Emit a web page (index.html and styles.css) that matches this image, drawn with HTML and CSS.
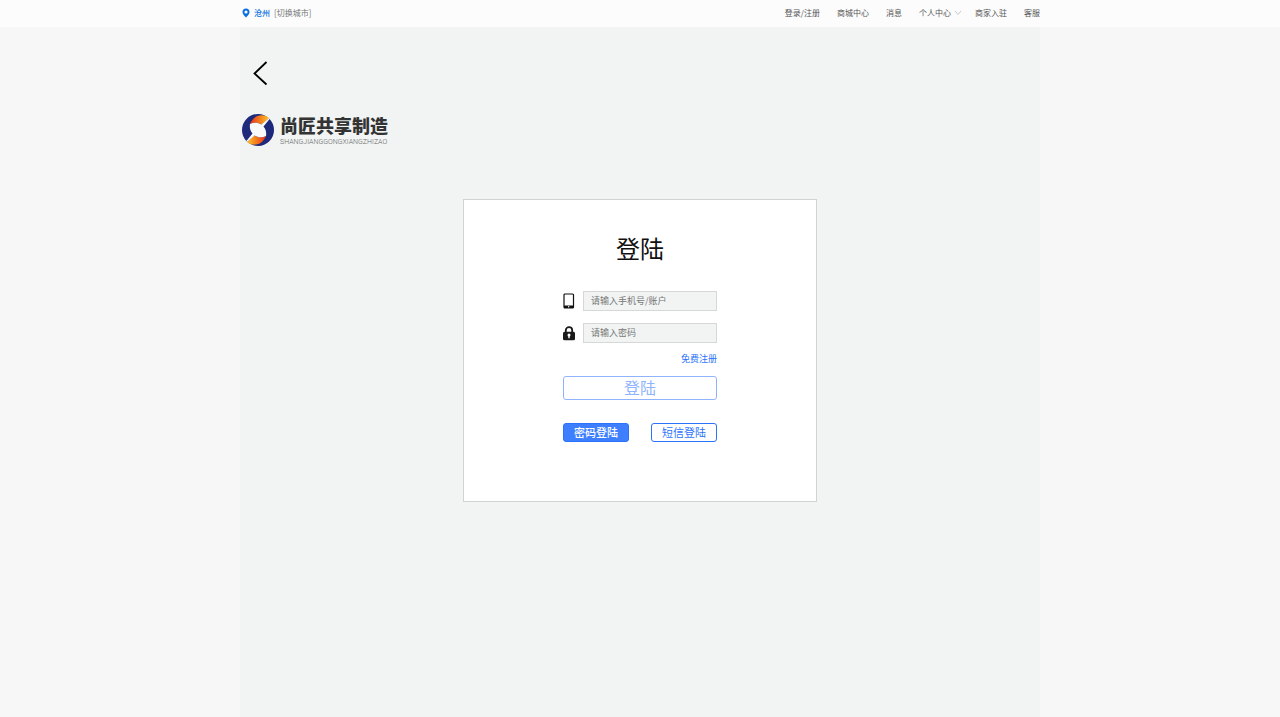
FILE: index.html
```
<!DOCTYPE html>
<html lang="zh-CN">
<head>
<meta charset="UTF-8">
<meta name="viewport" content="width=device-width, initial-scale=1">
<title>登陆</title>
<link rel="stylesheet" href="styles.css">
</head>
<body>

<header class="top-bar">
  <div class="top-inner">
    <div class="location">
      <svg class="pin" viewBox="0 0 8 10"><path fill="#0a6fe0" fill-rule="evenodd" d="M4 0.500a3.500 3.500 0 0 1 3.500 3.500C7.500 6 5.500 8 4 9.500 2.500 8 .5 6 .5 4A3.500 3.500 0 0 1 4 .5zM4 2.400a1.600 1.600 0 1 0 0 3.200 1.600 1.600 0 0 0 0-3.200z"/></svg>
      <a href="#" class="city">沧州</a>
      <a href="#" class="switch">[切换城市]</a>
    </div>
    <nav class="nav">
      <a href="#">登录/注册</a>
      <a href="#">商城中心</a>
      <a href="#">消息</a>
      <a href="#" class="has-arrow">个人中心<svg class="arrow" viewBox="0 0 8 6"><path fill="none" stroke="#bbb" stroke-width="0.800" d="M1 1l3 3.500L7 1"/></svg></a>
      <a href="#">商家入驻</a>
      <a href="#">客服</a>
    </nav>
  </div>
</header>

<main class="content">
  <button type="button" class="back" aria-label="返回">
    <svg viewBox="0 0 16 26"><path fill="none" stroke="#000" stroke-width="1.800" d="M14.500 2L2.500 13.500 14.500 24.500"/></svg>
  </button>

  <div class="brand">
    <svg class="brand-mark" viewBox="0 0 32 32">
      <defs>
        <linearGradient id="flame-top" x1="0" y1="0" x2="1" y2="0">
          <stop offset="0" stop-color="#e8331c"/>
          <stop offset="0.500" stop-color="#f47a1c"/>
          <stop offset="1" stop-color="#fdc52c"/>
        </linearGradient>
        <linearGradient id="flame-bottom" x1="0" y1="0" x2="1" y2="0">
          <stop offset="0" stop-color="#fdc52c"/>
          <stop offset="0.500" stop-color="#f47a1c"/>
          <stop offset="1" stop-color="#e8331c"/>
        </linearGradient>
      </defs>
      <circle cx="16" cy="16" r="16" fill="#1d2a7c"/>
      <path fill="url(#flame-top)" d="M8 10C10 5 13.500 2 18 1.500c3.500-.5 6.500.5 9 2.500L20 10.500C16 8.500 12 8 8 10z"/>
      <path fill="url(#flame-bottom)" d="M24 22c-2 5-5.500 8-10 8.500-3.500.5-6.500-.5-9-2.500l7-6.500c4 2 8 2.500 12 .5z"/>
      <path fill="#f8faf9" d="M8 10c4-2 8-1.500 11.500.5L27 4l.8.800-6.300 7.700c2.500 3 3 6 2.500 9.500-4 2-8 1.500-11.500-.5L5 28l-.8-.8 6.300-7.700C8 16.500 7.500 13.500 8 10z"/>
    </svg>
    <div class="brand-text">
      <div class="brand-name">尚匠共享制造</div>
      <div class="brand-pinyin">SHANGJIANGGONGXIANGZHIZAO</div>
    </div>
  </div>

  <form class="login-box">
    <h1>登陆</h1>
    <div class="field">
      <label for="account" aria-label="手机号/账户">
        <svg viewBox="0 0 12 16"><rect x="1" y="1" width="9.500" height="14" rx="1" fill="none" stroke="#111" stroke-width="1.200"/><path fill="#111" d="M1 12.500h9.500V15H1z"/><circle cx="5.700" cy="13.700" r="0.700" fill="#fff"/></svg>
      </label>
      <input type="text" id="account" placeholder="请输入手机号/账户">
    </div>
    <div class="field">
      <label for="password" aria-label="密码">
        <svg viewBox="0 0 12 16"><path fill="none" stroke="#1a1a1a" stroke-width="1.800" d="M2.800 8V5.300a3.200 3.200 0 0 1 6.400 0V8"/><rect x="0" y="6.800" width="12" height="8.500" rx="1.500" fill="#1a1a1a"/><circle cx="6" cy="10" r="1.500" fill="#fff"/><path fill="#fff" d="M5.300 10h1.400v3.300H5.300z"/></svg>
      </label>
      <input type="password" id="password" placeholder="请输入密码">
    </div>
    <a href="#" class="register">免费注册</a>
    <button type="submit" class="submit">登陆</button>
    <div class="modes">
      <button type="button" class="mode active">密码登陆</button>
      <button type="button" class="mode">短信登陆</button>
    </div>
  </form>
</main>

</body>
</html>
```
FILE: styles.css
```
* {
  box-sizing: border-box;
}

body {
  margin: 0;
  min-height: 100vh;
  display: flex;
  flex-direction: column;
  background-color: #f7f7f7;
  font-family: "Noto Sans CJK SC", sans-serif;
  font-size: 8px;
  line-height: 12px;
  color: #555;
}

a {
  color: inherit;
  text-decoration: none;
}

svg {
  display: block;
}

button,
input {
  font-family: inherit;
}

button {
  padding: 0;
  cursor: pointer;
}

/* top bar */
.top-bar {
  background-color: #fcfcfc;
}

.top-inner {
  display: flex;
  justify-content: space-between;
  align-items: center;
  max-width: 800px;
  height: 27px;
  margin: 0 auto;
  padding-bottom: 1px;
}

.location {
  display: flex;
  align-items: center;
  padding-left: 2px;
}

.pin {
  width: 8px;
  height: 10px;
}

.city {
  margin: 0 4px;
  color: #0a6fe0;
  font-weight: 500;
}

.switch {
  color: #777;
}

.nav {
  display: flex;
  gap: 17px;
}

.has-arrow {
  display: flex;
  align-items: center;
  margin-right: -4px;
}

.arrow {
  width: 8px;
  height: 6px;
  margin-left: 3px;
}

/* page */
.content {
  flex: 1;
  width: 100%;
  max-width: 800px;
  margin: 0 auto;
  padding-top: 33px;
  background-color: #f1f4f3;
}

.back {
  display: block;
  margin-left: 12px;
  border: none;
  background: none;
}

.back svg {
  width: 16px;
  height: 26px;
}

.brand {
  display: flex;
  align-items: center;
  gap: 6px;
  margin: 28px 0 0 2px;
}

.brand-mark {
  width: 32px;
  height: 32px;
}

.brand-name {
  font-size: 18px;
  line-height: 22px;
  font-weight: 900;
  color: #333;
}

.brand-pinyin {
  padding-top: 2px;
  font-family: Roboto, sans-serif;
  font-size: 7px;
  line-height: 8px;
  font-weight: 300;
  color: #666;
}

/* login box */
.login-box {
  width: 354px;
  max-width: 100%;
  margin: 53px auto 0;
  padding: 30px 99px 59px;
  border: 1px solid #d0d3d2;
  background-color: #fff;
}

h1 {
  margin: 0 0 25px;
  font-size: 24px;
  line-height: 36px;
  font-weight: 400;
  text-align: center;
  color: #111;
}

.field {
  display: flex;
  align-items: center;
  gap: 8px;
  margin-bottom: 12px;
}

.field svg {
  width: 12px;
  height: 16px;
}

.field input {
  flex: 1;
  min-width: 0;
  height: 20px;
  padding: 0 7px 2px;
  border: 1px solid #d5d8d7;
  background-color: #f1f4f3;
  font-size: 9px;
  color: #333;
}

.field input::placeholder {
  color: #777;
}

.register {
  display: block;
  margin: -2px 0 11px;
  font-size: 9px;
  line-height: 12px;
  text-align: right;
  color: #2b73fa;
}

.submit {
  display: block;
  width: 100%;
  height: 24px;
  padding-bottom: 2px;
  border: 1px solid #8fb4fd;
  border-radius: 3px;
  background-color: #fff;
  font-size: 16px;
  line-height: 20px;
  color: #8fb4fd;
}

.modes {
  display: flex;
  justify-content: space-between;
  margin-top: 23px;
}

.mode {
  width: 66px;
  height: 19px;
  border: 1px solid #2b73fa;
  border-radius: 3px;
  background-color: #fff;
  font-size: 11px;
  line-height: 17px;
  color: #2b73fa;
}

.mode.active {
  background-color: #3d7fff;
  font-weight: 500;
  color: #fff;
}
```
